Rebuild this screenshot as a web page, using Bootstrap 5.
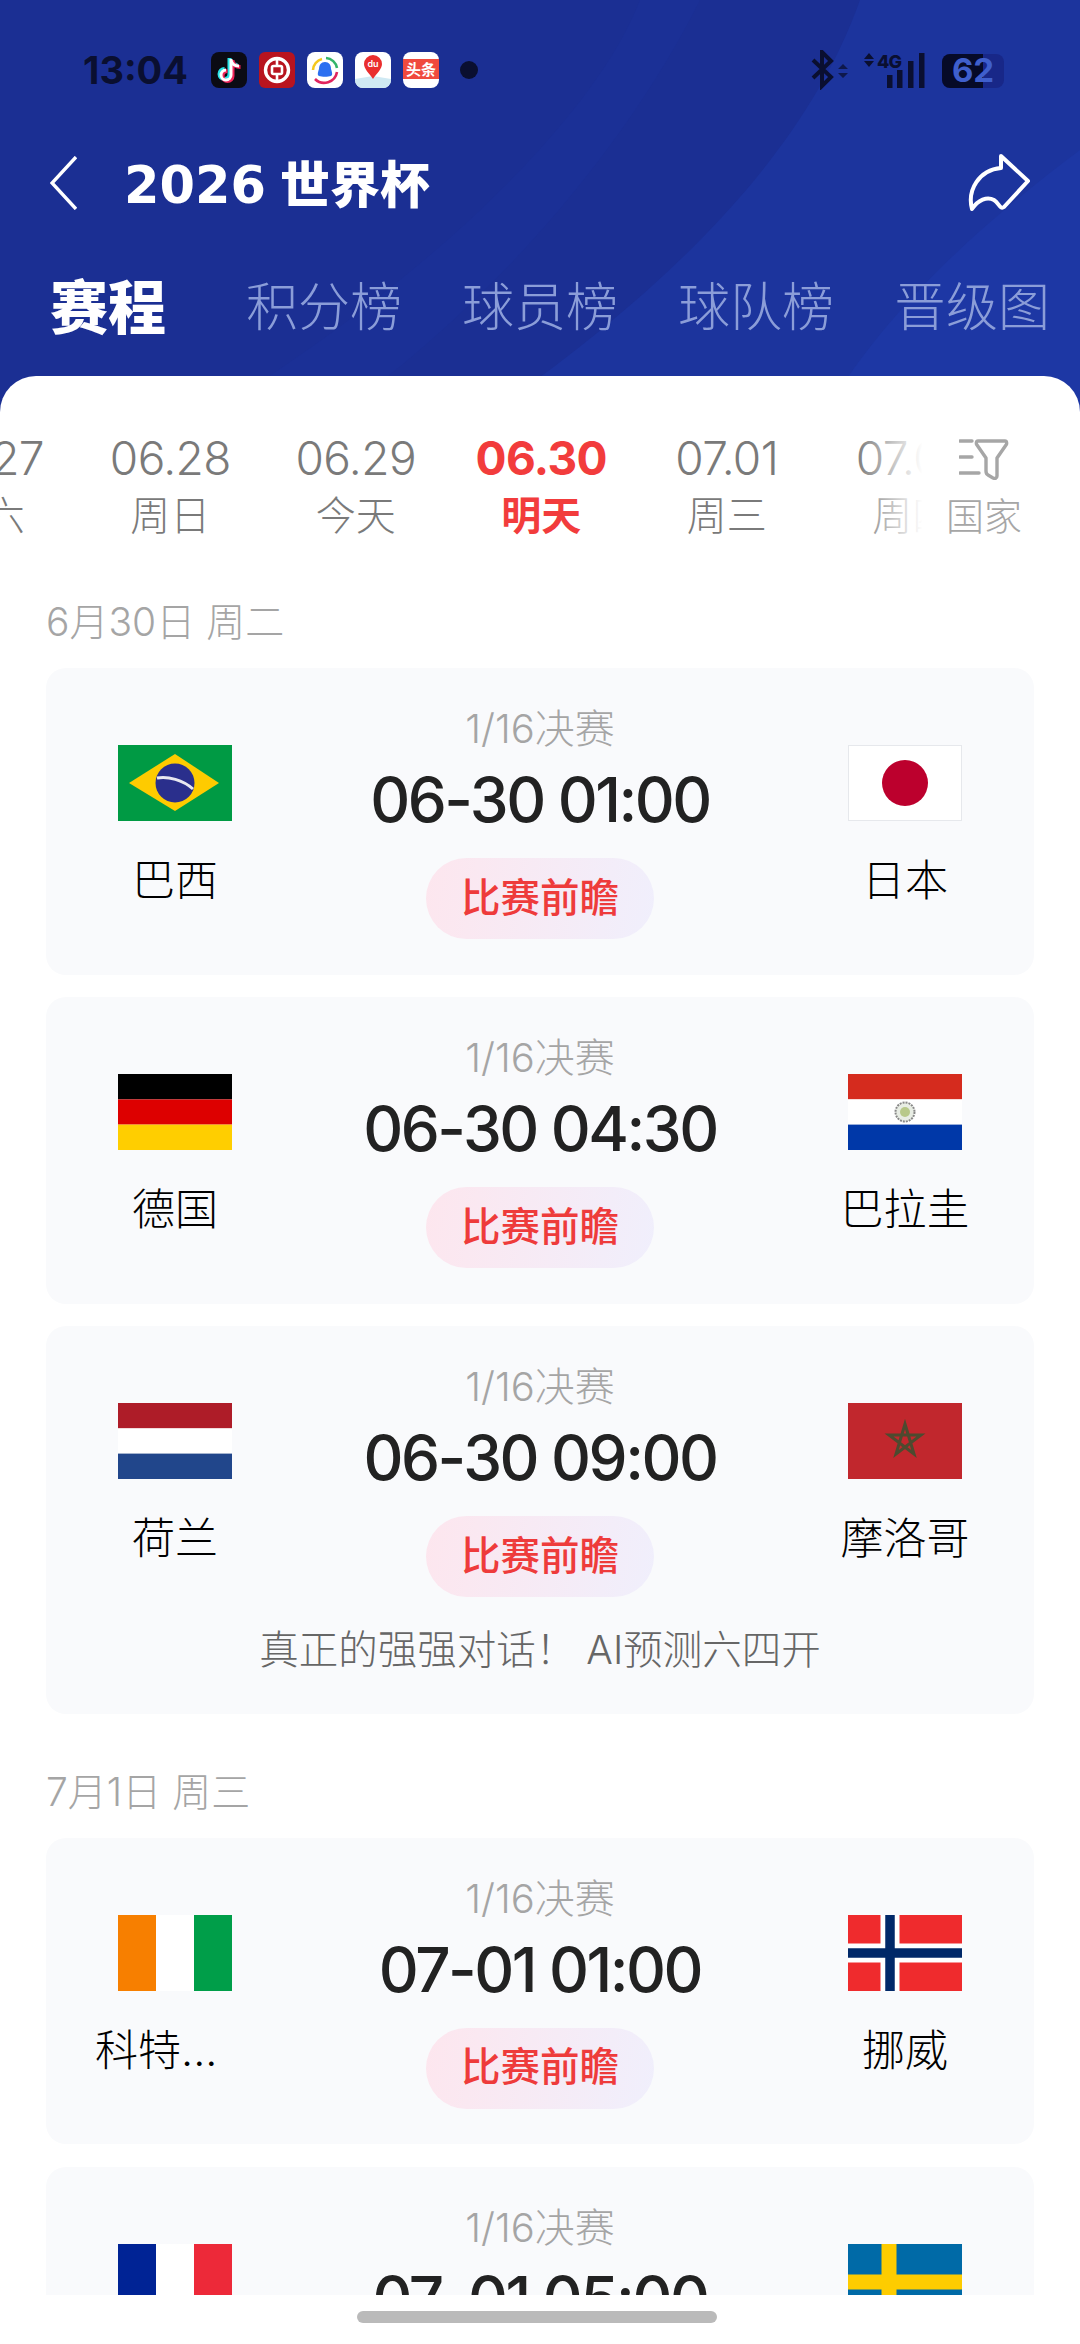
<!DOCTYPE html>
<html lang="zh-CN">
  <head>
    <meta charset="UTF-8" />
    <meta name="viewport" content="width=device-width, initial-scale=1.0" />
    <title>2026 世界杯 - 赛程</title>
    <link
      href="https://cdn.jsdelivr.net/npm/bootstrap@5.3.0/dist/css/bootstrap.min.css"
      rel="stylesheet"
    />
    <style>
      body {
        font-family: Inter, "Noto Sans CJK SC", sans-serif;
        background: #fff;
        margin: 0;
      }
      .phone-frame {
        width: 1080px;
        height: 2344px;
      }
      /* blue header */
      .hero {
        height: 420px;
        background: #1b2f93;
      }
      .hero-bands {
        left: 0;
        top: 0;
      }
      .status-row {
        padding: 52px 73px 0 83px;
        height: 88px;
        color: #0a0f30;
      }
      .status-time {
        font-size: 38px;
        font-weight: 700;
        line-height: 36px;
        width: 128px;
      }
      .app-icon {
        width: 36px;
        height: 36px;
        margin-right: 12px;
        display: block;
      }
      .status-dot {
        width: 18px;
        height: 18px;
        margin-left: 9px;
        background: #0a0f30;
        border-radius: 50%;
      }
      .title-row {
        height: 60px;
        margin-top: 65px;
        padding: 0 49px 0 50px;
      }
      .page-title {
        margin: 0 0 0 47px;
        font-family: "DejaVu Sans", "Noto Sans CJK SC", sans-serif;
        font-size: 51px;
        font-weight: 700;
        line-height: 60px;
        color: #fff;
      }
      .page-title span {
        font-family: "Noto Sans CJK SC", sans-serif;
        font-size: 50px;
        font-weight: 900;
        margin-left: 14px;
      }
      .tab-row {
        margin-top: 65px;
        padding-left: 50px;
        gap: 60px;
        flex-wrap: nowrap;
      }
      .tab-row .nav-link {
        padding: 0;
        font-size: 52px;
        font-weight: 300;
        line-height: 60px;
        color: #8b9dd8;
        white-space: nowrap;
      }
      .tab-row .nav-link.active {
        font-size: 58px;
        font-weight: 900;
        color: #fff;
        margin-right: 20px;
      }
      /* white sheet */
      .sheet {
        margin-top: -44px;
        background: #fff;
        border-radius: 36px 36px 0 0;
        height: 1968px;
      }
      .date-strip {
        padding-top: 54px;
        margin-left: -108px;
        width: 1300px;
      }
      .date-item {
        width: 185.5px;
        flex: none;
        text-align: center;
        color: #7a7a7a;
      }
      .date-num {
        font-size: 46px;
        line-height: 56px;
        font-weight: 300;
        letter-spacing: -0.6px;
      }
      .date-day {
        font-size: 40px;
        line-height: 60px;
        font-weight: 300;
      }
      .date-item.is-on {
        color: #f23c3c;
      }
      .date-item.is-on .date-num,
      .date-item.is-on .date-day {
        font-weight: 700;
      }
      .date-fade {
        top: 44px;
        right: 0;
        width: 225px;
        height: 126px;
        padding: 18px 58px 0 0;
        background: linear-gradient(90deg, rgba(255, 255, 255, 0), #fff 30%);
        color: #a6a6a6;
      }
      .date-fade span {
        font-size: 38px;
        line-height: 40px;
        font-weight: 300;
        margin-top: 16px;
      }
      .section-day {
        margin: 51px 0 21px 46px;
        font-size: 39px;
        font-weight: 300;
        line-height: 50px;
        color: #a5a5a5;
      }
      .section-day.next-day {
        margin-top: 53px;
      }
      .match-box {
        margin: 0 46px 22.5px;
        background: #f9fafc;
        border-radius: 20px;
      }
      .team-side {
        width: 258px;
        padding-top: 77px;
      }
      .team-flag {
        width: 114px;
        height: 76px;
        display: block;
      }
      .team-name {
        margin-top: 34px;
        font-size: 43px;
        font-weight: 300;
        line-height: 50px;
        color: #000;
      }
      .team-name.cut {
        width: 160px;
        text-align: left;
      }
      .match-mid {
        padding: 39px 0 35.5px;
      }
      .match-round {
        font-size: 40px;
        font-weight: 300;
        line-height: 44px;
        color: #a5a5a5;
      }
      .match-time {
        margin-top: 14px;
        font-size: 62px;
        font-weight: 500;
        letter-spacing: -2.5px;
        line-height: 70px;
        color: #222;
        white-space: nowrap;
      }
      .preview-pill {
        margin-top: 23px;
        width: 228px;
        height: 81px;
        border-radius: 41px;
        border: 0;
        padding: 0;
        font-size: 39.5px;
        font-weight: 500;
        color: #ee3b3b;
        background: linear-gradient(100deg, #fde6ee, #f0effc);
      }
      .match-note {
        margin-top: -8px;
        padding-bottom: 39px;
        font-size: 39.5px;
        font-weight: 300;
        line-height: 50px;
        color: #666;
      }
      .home-bar {
        left: 0;
        bottom: 0;
        width: 1080px;
        height: 49px;
        background: #fff;
      }
      .home-handle {
        width: 360px;
        height: 12px;
        margin: 16px 0 0 357px;
        background: #bababa;
        border-radius: 6px;
      }
    </style>
  </head>
  <body>
    <div class="phone-frame position-relative overflow-hidden">
      <header class="hero position-relative overflow-hidden">
        <svg class="hero-bands position-absolute" width="1080" height="420" viewBox="0 0 1080 420">
          <path d="M860 0C800 170 640 310 480 420H1080V0Z" fill="#1c349d" />
          <path d="M1080 150C960 240 880 320 820 420H1080Z" fill="#1d37a4" />
          <path d="M640 0C590 130 400 300 200 420H330C500 300 630 140 700 0Z" fill="#1b3096" />
        </svg>

        <div class="status-row d-flex align-items-center position-relative">
          <div class="status-time">13:04</div>
          <svg class="app-icon" viewBox="0 0 36 36">
            <rect width="36" height="36" rx="8" fill="#0b0b14" />
            <path d="M20 7V23A5 5 0 1 1 15 18M20 8C21 12 24 14 28 14" fill="none" stroke="#29e3e8" stroke-width="4" transform="translate(-1.5 -1)" />
            <path d="M20 7V23A5 5 0 1 1 15 18M20 8C21 12 24 14 28 14" fill="none" stroke="#f0245a" stroke-width="4" transform="translate(1.5 1)" />
            <path d="M20 7V23A5 5 0 1 1 15 18M20 8C21 12 24 14 28 14" fill="none" stroke="#fff" stroke-width="3" />
          </svg>
          <svg class="app-icon" viewBox="0 0 36 36">
            <rect width="36" height="36" rx="6" fill="#b8141f" />
            <circle cx="18" cy="18" r="11.5" fill="none" stroke="#fff" stroke-width="3.4" />
            <rect x="13" y="14" width="10" height="8" rx="1.5" fill="none" stroke="#fff" stroke-width="2.6" />
            <path d="M18 7V14M18 22V29" stroke="#fff" stroke-width="2.6" />
          </svg>
          <svg class="app-icon" viewBox="0 0 36 36">
            <rect width="36" height="36" rx="8" fill="#fff" />
            <path d="M6 18A12 12 0 0 1 15 7" fill="none" stroke="#f4c81f" stroke-width="2.6" />
            <path d="M19 6A12 12 0 0 1 30 16" fill="none" stroke="#35b56a" stroke-width="2.6" />
            <path d="M30 20A13 13 0 0 1 8 27" fill="none" stroke="#e0245e" stroke-width="2.6" />
            <path d="M18 10C22 10 24 13 24 17C25 20 26 23 24 24C21 25 15 25 12 24C10 23 11 20 12 17C12 13 14 10 18 10Z" fill="#2b6ff0" />
          </svg>
          <svg class="app-icon" viewBox="0 0 36 36">
            <rect width="36" height="36" rx="8" fill="#fff" />
            <path d="M0 27L18 24L36 27V28A8 8 0 0 1 28 36H8A8 8 0 0 1 0 28Z" fill="#cfe9f3" />
            <path d="M18 27C14 21 9 17 9 12A9 9 0 0 1 27 12C27 17 22 21 18 27Z" fill="#ea2e2e" />
            <text x="18" y="15" text-anchor="middle" font-family="Inter, sans-serif" font-size="9" font-weight="600" fill="#fff">du</text>
          </svg>
          <svg class="app-icon" viewBox="0 0 36 36">
            <rect width="36" height="36" rx="8" fill="#fff" />
            <rect y="7" width="36" height="20" fill="#f04a3e" />
            <text x="18" y="23" text-anchor="middle" font-family="Noto Sans CJK SC, sans-serif" font-size="15" font-weight="700" fill="#fff">头条</text>
          </svg>
          <div class="status-dot"></div>

          <svg class="ms-auto" width="197" height="40" viewBox="0 0 197 40">
            <!-- origin at x 810, y 49 -->
            <path d="M3 10L21 27L12 36V2L21 11L3 28" fill="none" stroke="#0a0f30" stroke-width="4" />
            <path d="M28 19L33 14L38 19ZM28 23H38L33 28Z" fill="#0a0f30" opacity="0.75" />
            <path d="M54 9L59 3L64 9ZM54 11H64L59 17Z" fill="#0a0f30" />
            <text x="67" y="18" font-family="Inter, sans-serif" font-size="18" font-weight="800" fill="#0a0f30" textLength="25">4G</text>
            <rect x="77" y="25" width="5.5" height="13" fill="#0a0f30" />
            <rect x="87" y="20" width="5.5" height="18" fill="#0a0f30" />
            <rect x="98" y="11" width="5.5" height="27" fill="#0a0f30" />
            <rect x="109" y="3" width="5.5" height="35" fill="#0a0f30" />
            <rect x="132" y="4" width="62" height="34" rx="8" fill="#182788" />
            <path d="M140 4H173V38H140A8 8 0 0 1 132 30V12A8 8 0 0 1 140 4Z" fill="#060a28" />
            <text x="163" y="32" text-anchor="middle" font-family="Inter, sans-serif" font-size="33" font-weight="700" fill="#3f5fcc">62</text>
          </svg>
        </div>

        <div class="title-row d-flex align-items-center position-relative">
          <svg width="27" height="54" viewBox="0 0 27 54">
            <path d="M26 1L2 27L26 53" fill="none" stroke="#fff" stroke-width="3.4" />
          </svg>
          <h1 class="page-title">2026<span>世界杯</span></h1>
          <svg class="ms-auto" width="64" height="60" viewBox="0 0 64 60">
            <path d="M34 3L61 28L37 54C33 57 32 50 27 47C20 43 11 47 5 56C0 37 12 17 34 15Z" fill="none" stroke="#fff" stroke-width="4" stroke-linejoin="round" />
          </svg>
        </div>

        <ul class="nav tab-row position-relative">
          <li class="nav-item"><a class="nav-link active" href="#">赛程</a></li>
          <li class="nav-item"><a class="nav-link" href="#">积分榜</a></li>
          <li class="nav-item"><a class="nav-link" href="#">球员榜</a></li>
          <li class="nav-item"><a class="nav-link" href="#">球队榜</a></li>
          <li class="nav-item"><a class="nav-link" href="#">晋级图</a></li>
        </ul>
      </header>

      <main class="sheet position-relative">
        <div class="position-relative overflow-hidden">
          <div class="date-strip d-flex" id="dateStrip"></div>
          <div class="date-fade position-absolute d-flex justify-content-end">
            <div class="d-flex flex-column align-items-center">
              <svg width="50" height="42" viewBox="0 0 50 42">
                <path d="M1 3H13M1 19H13M1 35H20" stroke="#a6a6a6" stroke-width="3.4" stroke-linecap="round" />
                <path d="M19 3H46C48 3 48 6 47 7L38 20V38C38 40 36 41 34 40L29 37C27 36 27 35 27 33V20L18 7C17 6 17 3 19 3Z" fill="none" stroke="#a6a6a6" stroke-width="3.4" stroke-linejoin="round" />
              </svg>
              <span>国家</span>
            </div>
          </div>
        </div>
        <div id="matchList"></div>
      </main>

      <div class="home-bar position-absolute">
        <div class="home-handle"></div>
      </div>
    </div>

    <script src="https://cdn.jsdelivr.net/npm/bootstrap@5.3.0/dist/js/bootstrap.bundle.min.js"></script>
    <script>
      const dates = [
        ["06.27", "周六"],
        ["06.28", "周日"],
        ["06.29", "今天"],
        ["06.30", "明天", true],
        ["07.01", "周三"],
        ["07.02", "周四"],
      ];

      document.getElementById("dateStrip").innerHTML = dates
        .map(
          ([num, day, on]) => `
          <div class="date-item ${on ? "is-on" : ""}">
            <div class="date-num">${num}</div>
            <div class="date-day">${day}</div>
          </div>`
        )
        .join("");

      // Flags all share a 114x76 box
      const bars = (a, b, c) => `
        <rect width="114" height="25.4" fill="${a}" />
        <rect y="25.4" width="114" height="25.2" fill="${b}" />
        <rect y="50.6" width="114" height="25.4" fill="${c}" />`;
      const stripes = (a, b, c) => `
        <rect width="38" height="76" fill="${a}" />
        <rect x="38" width="38" height="76" fill="${b}" />
        <rect x="76" width="38" height="76" fill="${c}" />`;

      const flags = {
        brazil: `
          <rect width="114" height="76" fill="#009a44" />
          <path d="M57 9L101 38L57 66L11 38Z" fill="#fecb00" />
          <circle cx="57" cy="38" r="19.5" fill="#2a2f8c" />
          <path d="M39 33C50 31 65 35 75 44" fill="none" stroke="#e8e8f0" stroke-width="3" />`,
        japan: `
          <rect x="0.5" y="0.5" width="113" height="75" fill="#fff" stroke="#e6e8ec" />
          <circle cx="57" cy="38" r="23" fill="#bc002d" />`,
        germany: bars("#000", "#dd0000", "#ffce00"),
        paraguay:
          bars("#d52b1e", "#fff", "#0038a8") +
          `<circle cx="57" cy="38" r="9.5" fill="#e8ede4" stroke="#888" stroke-width="2" stroke-dasharray="2 1" />
           <circle cx="57" cy="38" r="5" fill="#b8c98a" />`,
        netherlands: bars("#ae1c28", "#fff", "#21468b"),
        morocco: `
          <rect width="114" height="76" fill="#c1272d" />
          <path d="M57 21L66 51L41 32H73L48 51Z" fill="none" stroke="#4d4a2f" stroke-width="3" />`,
        ivory: stripes("#f77f00", "#fff", "#009e49"),
        norway: `
          <rect width="114" height="76" fill="#ef2b2d" />
          <path d="M42 0V76M0 38H114" stroke="#fff" stroke-width="19" />
          <path d="M42 0V76M0 38H114" stroke="#002868" stroke-width="9.5" />`,
        france: stripes("#002395", "#fff", "#ed2939"),
        sweden: `
          <rect width="114" height="76" fill="#006aa7" />
          <path d="M41 0V76M0 38H114" stroke="#fecc00" stroke-width="15" />`,
      };

      const days = [
        {
          label: "6月30日 周二",
          matches: [
            { home: "巴西", homeFlag: "brazil", away: "日本", awayFlag: "japan", time: "06-30 01:00" },
            { home: "德国", homeFlag: "germany", away: "巴拉圭", awayFlag: "paraguay", time: "06-30 04:30" },
            { home: "荷兰", homeFlag: "netherlands", away: "摩洛哥", awayFlag: "morocco", time: "06-30 09:00", note: "真正的强强对话！ AI预测六四开" },
          ],
        },
        {
          label: "7月1日 周三",
          matches: [
            { home: "科特...", homeFlag: "ivory", away: "挪威", awayFlag: "norway", time: "07-01 01:00", cut: true },
            { home: "法国", homeFlag: "france", away: "瑞典", awayFlag: "sweden", time: "07-01 05:00" },
          ],
        },
      ];

      function teamSide(name, flag, cut) {
        return `
          <div class="team-side flex-shrink-0 d-flex flex-column align-items-center">
            <svg class="team-flag" viewBox="0 0 114 76">${flags[flag]}</svg>
            <div class="team-name ${cut ? "cut" : ""}">${name}</div>
          </div>`;
      }

      function matchBox(m) {
        return `
          <div class="match-box">
            <div class="d-flex">
              ${teamSide(m.home, m.homeFlag, m.cut)}
              <div class="match-mid flex-grow-1 d-flex flex-column align-items-center">
                <div class="match-round">1/16决赛</div>
                <div class="match-time">${m.time}</div>
                <button class="btn preview-pill">比赛前瞻</button>
              </div>
              ${teamSide(m.away, m.awayFlag)}
            </div>
            ${m.note ? `<div class="match-note text-center">${m.note}</div>` : ""}
          </div>`;
      }

      document.getElementById("matchList").innerHTML = days
        .map(
          (d, i) => `
          <div class="section-day ${i ? "next-day" : ""}">${d.label}</div>
          ${d.matches.map(matchBox).join("")}`
        )
        .join("");
    </script>
  </body>
</html>
